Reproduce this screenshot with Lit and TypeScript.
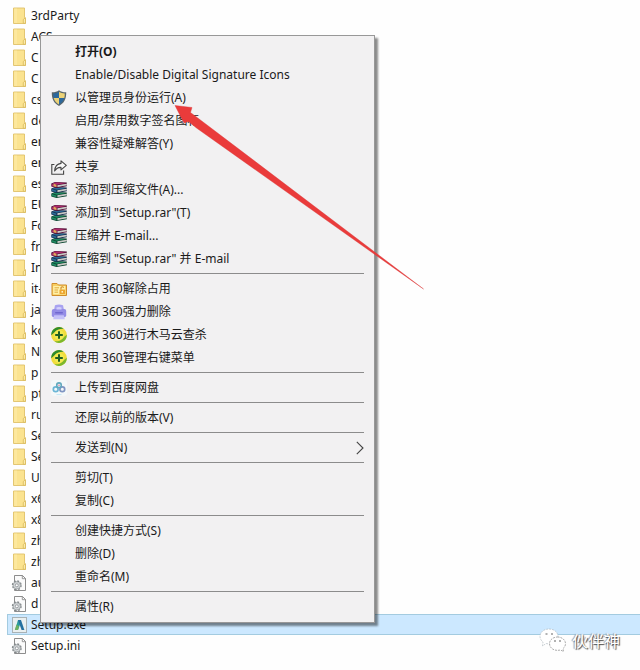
import { LitElement, html, css, svg, nothing } from "lit";
import { customElement } from "lit/decorators.js";
import { classMap } from "lit/directives/class-map.js";

type FileKind = "folder" | "config" | "app";
interface FileEntry { name: string; kind: FileKind; selected?: boolean }
interface MenuItem { label: string; icon?: string; bold?: boolean; submenu?: boolean }

const folders = ["3rdParty", "ACS", "C", "C", "cs", "de", "en", "en", "es", "EU", "Fo", "fr", "In", "it-",
  "ja", "ko", "N", "p", "pt", "ru", "Se", "Se", "U", "x6", "x8", "zh", "zh"];

const files: FileEntry[] = [
  ...folders.map((name): FileEntry => ({ name, kind: "folder" })),
  { name: "au", kind: "config" },
  { name: "d", kind: "config" },
  { name: "Setup.exe", kind: "app", selected: true },
  { name: "Setup.ini", kind: "config" },
];

const groups: MenuItem[][] = [
  [
    { label: "打开(O)", bold: true },
    { label: "Enable/Disable Digital Signature Icons" },
    { label: "以管理员身份运行(A)", icon: "shield" },
    { label: "启用/禁用数字签名图标" },
    { label: "兼容性疑难解答(Y)" },
    { label: "共享", icon: "share" },
    { label: "添加到压缩文件(A)...", icon: "rar" },
    { label: '添加到 "Setup.rar"(T)', icon: "rar" },
    { label: "压缩并 E-mail...", icon: "rar" },
    { label: '压缩到 "Setup.rar" 并 E-mail', icon: "rar" },
  ],
  [
    { label: "使用 360解除占用", icon: "unlock" },
    { label: "使用 360强力删除", icon: "shred" },
    { label: "使用 360进行木马云查杀", icon: "safe" },
    { label: "使用 360管理右键菜单", icon: "safe" },
  ],
  [{ label: "上传到百度网盘", icon: "cloud" }],
  [{ label: "还原以前的版本(V)" }],
  [{ label: "发送到(N)", submenu: true }],
  [{ label: "剪切(T)" }, { label: "复制(C)" }],
  [{ label: "创建快捷方式(S)" }, { label: "删除(D)" }, { label: "重命名(M)" }],
  [{ label: "属性(R)" }],
];

const book = (y: number, cover: string, dark: string) => svg`
  <path d="M.3 ${y + 1.5} L4 ${y} L15.800 ${y + .6} L15.800 ${y + 4.2} L5.500 ${y + 6} L.3 ${y + 4.4}Z" fill=${dark}/>
  <path d="M1.500 ${y + 1.5} L4.300 ${y + .5} L15 ${y + 1} L6 ${y + 2.7}Z" fill=${cover}/>
  <path d="M.8 ${y + 2.1} L5.400 ${y + 3.4} V${y + 5.2} L.8 ${y + 3.9}Z" fill=${cover}/>
  <path d="M6.500 ${y + 3.3} L15.800 ${y + 1.7} V${y + 3.3} L6.500 ${y + 5}Z" fill="#e3e2dc"/>
  <path d="M6.500 ${y + 4.2} L15.800 ${y + 2.6}" stroke="#999" stroke-width=".4"/>`;

const icons: Record<string, unknown> = {
  folder: svg`
    <path d="M2.500 1 H13.500 V10.500 L14.500 11.500 V16.500 H2.500Z" fill="#fbe390" stroke="#e0c169" stroke-width=".9"/>
    <path d="M3.200 1.600 H6 V16 H3.200Z" fill="#fde89e"/>
    <path d="M12.300 16.300 V12.500 L14.400 10.600 V16.300Z" fill="#fff1b5" stroke="#d8b655" stroke-width=".8"/>`,
  config: svg`
    <path d="M3.500 1.500 H11.500 L14.500 4.500 V16.500 H3.500Z" fill="#fbfbfb" stroke="#808080" stroke-width=".9"/>
    <path d="M11.300 1.500 V4.700 H14.500" fill="none" stroke="#808080" stroke-width=".8"/>
    <circle cx="5.800" cy="11.300" r="4.200" fill="#d6d9db" stroke="#858a8d" stroke-width="1.600" stroke-dasharray="1.800 1.500"/>
    <circle cx="5.800" cy="11.300" r="3.600" fill="#d3d7d9" stroke="#8e9396" stroke-width=".6"/>
    <circle cx="5.800" cy="11.300" r="1.500" fill="#fff" stroke="#888d90" stroke-width=".8"/>`,
  app: svg`
    <rect x="1.500" y="1.500" width="14" height="15" fill="#e9eff0" stroke="#a9b2b5"/>
    <path d="M4 14 L7 4 H9.200 L9.400 7.500 L7 14Z" fill="#2a9d9c"/>
    <path d="M7 4 H10 L13.400 14 H10.600 L8.400 8Z" fill="#2470a0"/>
    <path d="M3.800 14 L5.500 8.500 L8 10.500 L7 14Z" fill="#6db060"/>`,
  shield: svg`
    <path d="M8 .3 C10 1.800 12.600 2.400 15.200 2.300 C15.400 9 13.200 13.200 8 16 C2.800 13.200 .6 9 .8 2.300 C3.400 2.400 6 1.800 8 .3Z" fill="#59666c"/>
    <path d="M8 1.800 C6.400 2.900 4.400 3.400 2.200 3.400 Q2.200 6 2.700 8 H8Z" fill="#2c689c"/>
    <path d="M8 1.800 C9.600 2.900 11.600 3.400 13.800 3.400 Q13.800 6 13.300 8 H8Z" fill="#ecd277"/>
    <path d="M2.700 8 Q3.800 12.200 8 14.600 V8Z" fill="#ecd277"/>
    <path d="M13.300 8 Q12.200 12.200 8 14.600 V8Z" fill="#2c689c"/>`,
  share: svg`
    <path d="M3.400 5.500 H.8 V15.200 H12.600 V11.500" fill="none" stroke="#444" stroke-width="1.100"/>
    <path d="M10 1.800 L15.300 6.300 L10 10.800 V8.400 C7.200 8.200 5.400 9.200 3.600 12 C4 7.500 6.200 4.800 10 4.400Z" fill="#f8f8f8" stroke="#444" stroke-width="1.100" stroke-linejoin="round"/>`,
  rar: svg`
    ${book(10, "#1f8a62", "#0c4630")}
    ${book(5, "#2a6a96", "#182f4e")}
    ${book(0, "#b02a6c", "#501238")}
    <path d="M2.500 1.500 L5.500 2.800 V5 L2.500 4.200Z" fill="#e2a95a"/>`,
  unlock: svg`
    <path d="M1 2.500 H6 L7.500 4 H15.500 V14.500 H1Z" fill="#f8cf62" stroke="#cf8d2b"/>
    <rect x="2.200" y="5" width="12" height="8.300" fill="#fff0a8"/>
    <path d="M3.500 6.800 H8 M3.500 9 H7 M3.500 11.200 H7" stroke="#e0ab3e"/>
    <rect x="8.500" y="8.500" width="5.500" height="4.500" rx=".6" fill="#eda630"/>
    <path d="M10 8.500 V6.600 Q11.300 5 12.700 6.600" fill="none" stroke="#d28a26" stroke-width="1.100"/>
    <rect x="10.500" y="10" width="1.500" height="1.600" fill="#fff3c4"/>`,
  shred: svg`
    <path d="M4 1.200 Q8 0 12 1.200 L13 6 H3Z" fill="#a8a2f0"/>
    <rect x=".8" y="5" width="14.400" height="8.200" rx="2" fill="#948de6"/>
    <path d="M5.500 5.600 V3.600 Q8 2.400 10.500 3.600 V5.600Z" fill="#d3d0fb"/>
    <rect x="4" y="8" width="8" height="1.600" rx=".8" fill="#7068cf"/>
    <path d="M3.200 11.200 H12.800 L13.800 15.200 H2.200Z" fill="#c4c1f8"/>`,
  safe: svg`
    <circle cx="8" cy="8" r="7.900" fill="#f0dc3c"/>
    <path d="M.2 8.300 A7.800 7.800 0 0 1 12.800 1.800 Q7.200 1.400 4.400 4.600 Q2.600 6.400 .2 8.300Z" fill="#2f8c2c"/>
    <path d="M15.800 7.700 A7.800 7.800 0 0 1 3.200 14.200 Q8.800 14.600 11.600 11.400 Q13.400 9.600 15.800 7.700Z" fill="#7cb82d"/>
    <circle cx="8" cy="8" r="4.900" fill="#f1ea50"/>
    <path d="M8 4.200 V11.800 M4.200 8 H11.800" stroke="#1f5f22" stroke-width="2"/>`,
  cloud: svg`
    <rect width="16" height="16" rx="3" fill="#f4f8f9"/>
    <circle cx="4.700" cy="9.200" r="2.400" fill="none" stroke="#6bb6d6" stroke-width="1.700"/>
    <circle cx="11.300" cy="9.200" r="2.400" fill="none" stroke="#7f95c2" stroke-width="1.700"/>
    <circle cx="8" cy="5.200" r="2.300" fill="none" stroke="#62a9bd" stroke-width="1.600"/>
    <circle cx="8" cy="5.200" r=".8" fill="#d9779a"/>
    <path d="M5.500 14.600 H10.500" stroke="#b8dff0" stroke-width=".8"/>`,
};

@customElement("app-root")
export class AppRoot extends LitElement {
  static styles = css`
    :host {
      display: block;
      position: relative;
      min-height: 100vh;
      box-sizing: border-box;
      overflow: hidden;
      background: #fefefe;
      color: #1a1a1a;
      font: 12px/20px "Noto Sans", "Noto Sans CJK SC", sans-serif;
    }
    .files { list-style: none; margin: 0; padding: 5px 0 0 7px; }
    .file {
      display: flex;
      align-items: center;
      gap: 3px;
      height: 21px;
      padding-left: 4px;
      box-sizing: border-box;
      border: 0 solid #a3cbe0;
    }
    .selected { background: #cce8ff; border-width: 1px 0 1px 1px; padding-left: 3px; }
    .glyph { display: block; flex: none; width: 16px; height: 16px; }
    .file .glyph { width: 17px; height: 18px; }
    .menu {
      position: absolute;
      left: 40px;
      top: 35px;
      width: 335px;
      box-sizing: border-box;
      padding: 4px 0;
      border: 1px solid #989898;
      background: #f2f1f2;
      box-shadow: 3px 3px 2px rgba(0, 0, 0, 0.45);
    }
    .item {
      display: flex;
      align-items: center;
      gap: 8px;
      width: 100%;
      height: 23px;
      padding: 0 10px;
      border: 0;
      background: none;
      color: inherit;
      font: inherit;
      text-align: left;
      white-space: nowrap;
    }
    .item:hover { background: #fff; }
    .bold { font-weight: 700; }
    .label { flex: 1; }
    .chevron { width: 8px; height: 14px; }
    .line { height: 1px; margin: 3px 10px; border: 0; background: #8c8c8c; }
    .arrow { position: absolute; left: 174px; top: 104px; width: 250px; height: 186px; pointer-events: none; }
    .mark {
      position: absolute;
      left: 539px;
      top: 628px;
      display: flex;
      align-items: center;
      gap: 5px;
      color: #fff;
      font-size: 16px;
      line-height: 26px;
      text-shadow: 1px 1px 1px #444, -1px 0 1px #999;
    }
    .wechat { width: 28px; height: 26px; }
  `;

  private glyph(name?: string) {
    const box = name === "folder" || name === "config" || name === "app" ? "0 0 17 18" : "0 0 16 16";
    return html`<svg class="glyph" viewBox=${box} aria-hidden="true">${name ? icons[name] : nothing}</svg>`;
  }

  private item(it: MenuItem) {
    return html`<button class=${classMap({ item: true, bold: !!it.bold })} role="menuitem">
      ${this.glyph(it.icon)}<span class="label">${it.label}</span>
      ${it.submenu
        ? html`<svg class="chevron" viewBox="0 0 8 14" aria-hidden="true"><path d="M.8 .8 L7 7 L.8 13.200" fill="none" stroke="#444" stroke-width="1.100"/></svg>`
        : nothing}
    </button>`;
  }

  render() {
    return html`
      <ul class="files">
        ${files.map((f) => html`<li class=${classMap({ file: true, selected: !!f.selected })}>${this.glyph(f.kind)}<span>${f.name}</span></li>`)}
      </ul>
      <div class="menu" role="menu">
        ${groups.map((g, i) => html`${i ? html`<hr class="line" />` : nothing}${g.map((it) => this.item(it))}`)}
      </div>
      <svg class="arrow" viewBox="0 0 250 186" aria-hidden="true">
        <path d="M1 1.500 L18 3.500 L16.500 8.500 L249.500 185 L22.500 24 L14.500 17.500 L10 19Z" fill="#ea3b3b" stroke="#d93434" stroke-width=".4"/>
      </svg>
      <div class="mark">
        <svg class="wechat" viewBox="0 0 28 26" aria-hidden="true">
          <path d="M10 1 C15 1 19 4 19 8.500 C19 13 15 16 10 16 L7 15.500 L3.500 18 L4 14 C2 12.500 1 10.500 1 8.500 C1 4 5 1 10 1Z" fill="#fff" stroke="#a9b4ba" stroke-width=".6" stroke-dasharray="2 1"/>
          <path d="M18.500 9 C23 9 26.500 12 26.500 15.500 C26.500 18 25.500 19.500 24 20.500 L24.500 23.500 L21.500 22 C15 23.500 10.500 20 10.500 15.500 C10.500 12 14 9 18.500 9Z" fill="#fff" stroke="#888" stroke-width=".7" stroke-dasharray="2 1"/>
          <path d="M6.500 6 H8.500 M12 6 H14 M15 13 H17 M20 13 H22" stroke="#666" stroke-width="1.200"/>
        </svg>
        <span>伙伴神</span>
      </div>`;
  }
}
